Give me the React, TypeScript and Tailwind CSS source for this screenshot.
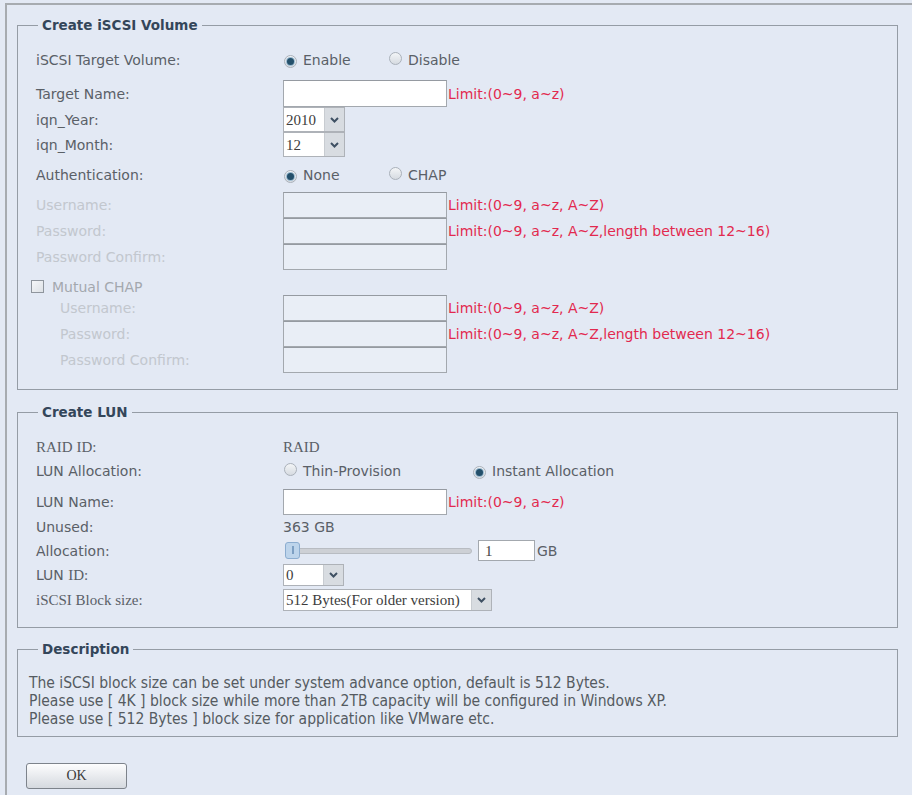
import React from 'react';

const serif = "font-['Liberation_Serif',serif]";

function Chevron() {
  return (
    <svg width="11" height="8" viewBox="0 0 11 8" className="block">
      <polyline points="2,2 5.5,5.5 9,2" fill="none" stroke="#3f5063" strokeWidth="2" />
    </svg>
  );
}

function Radio({ checked }: { checked?: boolean }) {
  return (
    <span className="inline-flex h-[13px] w-[13px] shrink-0 items-center justify-center rounded-full border border-[#aab1ba] bg-linear-to-b from-[#f3f5f7] to-[#d6dbe1]">
      {checked && <span className="h-[7px] w-[7px] rounded-full bg-[#24506b] shadow-[0_0_0_1px_#9bbad0]" />}
    </span>
  );
}

function RadioOption({ checked, label, w }: { checked?: boolean; label: string; w: string }) {
  return (
    <div className={`flex items-center ${w}`}>
      <span className="ml-[1px]">
        <Radio checked={checked} />
      </span>
      <span className="ml-[6px]">{label}</span>
    </div>
  );
}

function TextBox({ disabled, className = 'w-[164px] h-[26px]' }: { disabled?: boolean; className?: string }) {
  return (
    <div
      className={`${className} border border-[#a3a8ae] border-t-[#959aa1] ${disabled ? 'bg-[#e9eef6]' : 'bg-white'}`}
    />
  );
}

function Select({ value, textClass, h = 'h-[25px]' }: { value: string; textClass: string; h?: string }) {
  return (
    <div className={`flex ${h} border border-[#aeb2b8] bg-white`}>
      <div className={`${textClass} flex items-center whitespace-nowrap pl-[2px] ${serif} text-[15px] text-[#3c3c3c]`}>{value}</div>
      <div className="flex w-[20px] items-center justify-center border-l border-[#c8ccd1] bg-[#d8dce1]">
        <Chevron />
      </div>
    </div>
  );
}

function Limit({ children }: { children: React.ReactNode }) {
  return <span className="ml-[1px] whitespace-nowrap text-[#e2294f]">{children}</span>;
}

function Row({
  label,
  labelClass = '',
  className = '',
  children,
}: {
  label: React.ReactNode;
  labelClass?: string;
  className?: string;
  children?: React.ReactNode;
}) {
  return (
    <div className={`flex items-center ${className}`}>
      <div className={`w-[247px] shrink-0 whitespace-nowrap ${labelClass}`}>{label}</div>
      <div className="flex items-center">{children}</div>
    </div>
  );
}

function Fieldset({ title, className = '', children }: { title: string; className?: string; children: React.ReactNode }) {
  return (
    <fieldset className={`w-[881px] border border-[#959ca5] ${className}`}>
      <legend className="ml-[20px] px-[4px] text-[13.5px] font-bold leading-[16px] text-[#34465a]">{title}</legend>
      {children}
    </fieldset>
  );
}

const dim = 'text-[#c2c7ce]';

export default function App() {
  return (
    <div className="h-[795px] w-[912px] overflow-hidden bg-[#e3e9f4] font-['DejaVu_Sans',sans-serif] text-[14px] leading-[18px] text-[#5a6067]">
      <div className="ml-[5px] mt-[3px] h-[800px] border-l-2 border-t-2 border-[#a7abb0] pl-[10px] pt-[12px]">
        <Fieldset title="Create iSCSI Volume">
          <div className="pb-[16px] pl-[18px] pt-[15px]">
            <Row label="iSCSI Target Volume:" className="mb-[8px] h-[24px]">
              <RadioOption checked label="Enable" w="w-[105px]" />
              <RadioOption label="Disable" w="w-[105px]" />
            </Row>
            <Row label="Target Name:" className="h-[27px]">
              <TextBox className="h-[27px] w-[164px]" />
              <Limit>Limit:(0~9, a~z)</Limit>
            </Row>
            <Row label="iqn_Year:" className="h-[25px]">
              <Select value="2010" textClass="w-[40px]" />
            </Row>
            <Row label="iqn_Month:" className="h-[25px]">
              <Select value="12" textClass="w-[40px]" />
            </Row>
            <Row label="Authentication:" className="h-[35px]">
              <RadioOption checked label="None" w="w-[105px]" />
              <RadioOption label="CHAP" w="w-[105px]" />
            </Row>
            <Row label="Username:" labelClass={dim} className="h-[26px]">
              <TextBox disabled />
              <Limit>Limit:(0~9, a~z, A~Z)</Limit>
            </Row>
            <Row label="Password:" labelClass={dim} className="h-[26px]">
              <TextBox disabled />
              <Limit>Limit:(0~9, a~z, A~Z,length between 12~16)</Limit>
            </Row>
            <Row label="Password Confirm:" labelClass={dim} className="h-[26px]">
              <TextBox disabled />
            </Row>
            <div className="-ml-[5px] flex h-[25px] items-center pt-[8px]">
              <span className="h-[13px] w-[13px] border border-[#8f959d] bg-linear-to-br from-[#f6f7f9] to-[#dde1e6]" />
              <span className="ml-[8px] text-[#a3a8ae]">Mutual CHAP</span>
            </div>
            <Row label="Username:" labelClass={`${dim} pl-[24px]`} className="h-[26px]">
              <TextBox disabled />
              <Limit>Limit:(0~9, a~z, A~Z)</Limit>
            </Row>
            <Row label="Password:" labelClass={`${dim} pl-[24px]`} className="h-[26px]">
              <TextBox disabled />
              <Limit>Limit:(0~9, a~z, A~Z,length between 12~16)</Limit>
            </Row>
            <Row label="Password Confirm:" labelClass={`${dim} pl-[24px]`} className="h-[26px]">
              <TextBox disabled />
            </Row>
          </div>
        </Fieldset>

        <Fieldset title="Create LUN" className="mt-[14px]">
          <div className="pb-[15px] pl-[18px] pt-[16px]">
            <Row label="RAID ID:" labelClass={`${serif} text-[15px]`} className="h-[22px]">
              <span className={`${serif} text-[15px]`}>RAID</span>
            </Row>
            <Row label="LUN Allocation:" className="mb-[5px] h-[26px]">
              <RadioOption label="Thin-Provision" w="w-[189px]" />
              <RadioOption checked label="Instant Allocation" w="w-[180px]" />
            </Row>
            <Row label="LUN Name:" className="h-[26px]">
              <TextBox />
              <Limit>Limit:(0~9, a~z)</Limit>
            </Row>
            <Row label="Unused:" className="h-[24px]">
              <span>363 GB</span>
            </Row>
            <Row label="Allocation:" className="h-[23px]">
              <div className="relative ml-[2px] h-[18px] w-[187px]">
                <div className="absolute left-0 right-0 top-[6px] h-[6px] rounded-full border border-[#b8bcc2] bg-[#cdd0d5]" />
                <div className="absolute left-0 top-0 flex h-[17px] w-[15px] items-center justify-center rounded-[3px] border border-[#8cadd0] bg-[#bdd4eb]">
                  <span className="h-[8px] w-[2px] bg-[#7d9fc3]" />
                </div>
              </div>
              <div className={`ml-[6px] flex h-[21px] w-[57px] items-center border border-[#a3a8ae] bg-white pl-[6px] ${serif} text-[15px] text-[#444]`}>
                1
              </div>
              <span className="ml-[2px]">GB</span>
            </Row>
            <Row label={<><span>LUN </span><span className={`${serif} text-[15px]`}>ID:</span></>} className="h-[26px]">
              <Select value="0" textClass="w-[39px]" h="h-[22px]" />
            </Row>
            <Row label="iSCSI Block size:" labelClass={`${serif} text-[15px]`} className="h-[24px]">
              <Select value="512 Bytes(For older version)" textClass="w-[187px]" h="h-[22px]" />
            </Row>
          </div>
        </Fieldset>

        <Fieldset title="Description" className="mt-[13px]">
          <div className="pb-[8px] pl-[11px] pt-[17px] font-['DejaVu_Sans_Condensed',sans-serif] text-[15.5px] leading-[18px] text-[#555b61]">
            <div>The iSCSI block size can be set under system advance option, default is 512 Bytes.</div>
            <div>Please use [ 4K ] block size while more than 2TB capacity will be configured in Windows XP.</div>
            <div>Please use [ 512 Bytes ] block size for application like VMware etc.</div>
          </div>
        </Fieldset>

        <button
          className={`ml-[9px] mt-[26px] h-[26px] w-[101px] rounded-[3px] border border-[#7d838b] bg-linear-to-b from-[#fdfdfe] to-[#d5d9df] ${serif} text-[14px] text-[#3a3a3a]`}
        >
          OK
        </button>
      </div>
    </div>
  );
}
